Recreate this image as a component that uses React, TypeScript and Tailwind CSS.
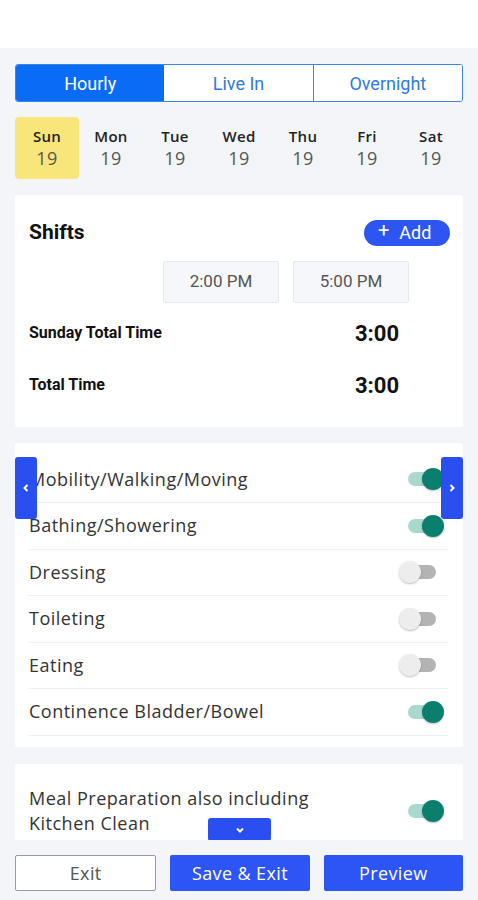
import React from "react";

const muli = { fontFamily: "'Open Sans', Lato, sans-serif" };

function Toggle({ on }: { on: boolean }) {
  return (
    <div className="relative w-[46px] h-[24px] shrink-0">
      <div
        className={`absolute left-[9px] top-[5px] w-[28px] h-[14px] rounded-full ${
          on ? "bg-[#a9d9cd]" : "bg-[#b3b3b3]"
        }`}
      />
      <div
        className={`absolute top-[1px] w-[22px] h-[22px] rounded-full shadow-[0_1px_2px_rgba(0,0,0,0.25)] ${
          on ? "left-[23px] bg-[#0b7f6e]" : "left-0 bg-[#ededed]"
        }`}
      />
    </div>
  );
}

const activities: [string, boolean][] = [
  ["Mobility/Walking/Moving", true],
  ["Bathing/Showering", true],
  ["Dressing", false],
  ["Toileting", false],
  ["Eating", false],
  ["Continence Bladder/Bowel", true],
];

const days = ["Sun", "Mon", "Tue", "Wed", "Thu", "Fri", "Sat"];

export default function App() {
  return (
    <div
      className="w-[478px] h-[900px] flex flex-col bg-[#f3f5f9] overflow-hidden"
      style={{ fontFamily: "Roboto, sans-serif" }}
    >
      <div className="h-[48px] bg-white shrink-0" />
      <div className="relative flex-1 overflow-hidden px-[15px] pt-[16px]">
        {/* Tabs */}
        <div className="flex h-[38px] rounded-[3px] border border-[#3a86e6] overflow-hidden text-[18px]">
          <div className="flex-1 flex items-center justify-center bg-[#0a6cf5] text-white">Hourly</div>
          <div className="flex-1 flex items-center justify-center bg-white text-[#2f7be0] border-r border-[#3a86e6]">
            Live In
          </div>
          <div className="flex-1 flex items-center justify-center bg-white text-[#2f7be0]">Overnight</div>
        </div>

        {/* Days */}
        <div className="grid grid-cols-7 mt-[15px] h-[62px]" style={muli}>
          {days.map((d, i) => (
            <div
              key={d}
              className={`flex flex-col items-center justify-center rounded-[4px] ${
                i === 0 ? "bg-[#f8e67a]" : ""
              }`}
            >
              <span className="text-[15px] font-semibold text-[#222] leading-[20px] tracking-[0.3px]">{d}</span>
              <span className="text-[18px] text-[#555] leading-[24px] tracking-[0.5px]">19</span>
            </div>
          ))}
        </div>

        {/* Shifts card */}
        <div className="mt-[16px] bg-white rounded-[3px] px-[14px] pt-[22px] pb-[28px]">
          <div className="flex items-center justify-between">
            <span className="text-[21px] font-bold text-[#111]">Shifts</span>
            <div className="flex items-center gap-[10px] bg-[#2d55f2] text-white rounded-full h-[26px] w-[86px] pl-[14px] mr-[-1px] text-[18px]">
              <span className="text-[20px] leading-none -mt-[6px]">+</span>
              <span>Add</span>
            </div>
          </div>
          <div className="flex gap-[14px] mt-[12px] ml-[134px]">
            {["2:00 PM", "5:00 PM"].map((t) => (
              <div
                key={t}
                className="w-[116px] h-[42px] flex items-center justify-center bg-[#f6f7fa] border border-[#e6e9ee] rounded-[2px] text-[17px] text-[#555]"
              >
                {t}
              </div>
            ))}
          </div>
          <div className="flex items-start mt-[18px]">
            <span className="text-[16px] font-bold text-[#111] w-[326px]">Sunday Total Time</span>
            <span className="text-[22px] font-bold text-[#111] leading-[26px]">3:00</span>
          </div>
          <div className="flex items-start mt-[26px]">
            <span className="text-[16px] font-bold text-[#111] w-[326px]">Total Time</span>
            <span className="text-[22px] font-bold text-[#111] leading-[26px]">3:00</span>
          </div>
        </div>

        {/* Activities card */}
        <div className="relative mt-[16px] bg-white rounded-[3px] px-[14px] pt-[14px] pb-[11px]" style={muli}>
          {activities.map(([label, on]) => (
            <div
              key={label}
              className="flex items-center justify-between h-[46.5px] border-b border-[#eef0f3] pr-[4px]"
            >
              <span className="text-[18px] text-[#333] tracking-[0.5px]">{label}</span>
              <Toggle on={on} />
            </div>
          ))}
          <div className="absolute left-0 top-[14px] w-[22px] h-[62px] bg-[#2a4ff0] rounded-[3px] flex items-center justify-center">
            <svg width="8" height="10" viewBox="0 0 8 10">
              <path d="M5.5 2 L2.5 5 L5.5 8" stroke="white" strokeWidth="2" fill="none" />
            </svg>
          </div>
          <div className="absolute right-0 top-[14px] w-[22px] h-[62px] bg-[#2a4ff0] rounded-[3px] flex items-center justify-center">
            <svg width="8" height="10" viewBox="0 0 8 10">
              <path d="M2.5 2 L5.5 5 L2.5 8" stroke="white" strokeWidth="2" fill="none" />
            </svg>
          </div>
        </div>

        {/* Meal card */}
        <div className="mt-[17px] bg-white rounded-[3px] px-[14px] pt-[22px] pb-[20px]" style={muli}>
          <div className="flex items-center justify-between pr-[4px]">
            <span className="text-[18px] text-[#333] leading-[25px] tracking-[0.5px]">
              Meal Preparation also including
              <br />
              Kitchen Clean
            </span>
            <Toggle on={true} />
          </div>
        </div>

        <div className="absolute bottom-[-1px] left-[208px] w-[63px] h-[23px] bg-[#2a4ff0] rounded-[3px] flex items-center justify-center">
          <svg width="10" height="8" viewBox="0 0 10 8">
            <path d="M2 2.5 L5 5.5 L8 2.5" stroke="white" strokeWidth="2" fill="none" />
          </svg>
        </div>
      </div>

      {/* Bottom bar */}
      <div className="h-[60px] shrink-0 flex gap-[14px] px-[15px] pt-[15px] pb-[9px] tracking-[0.4px]" style={muli}>
        <div className="flex-1 flex items-center justify-center bg-white border border-[#9a9a9a] rounded-[2px] text-[18px] text-[#555]">
          Exit
        </div>
        <div className="flex-1 flex items-center justify-center bg-[#2d55f5] rounded-[2px] text-[18px] text-white">
          Save &amp; Exit
        </div>
        <div className="flex-1 flex items-center justify-center bg-[#2d55f5] rounded-[2px] text-[18px] text-white">
          Preview
        </div>
      </div>
    </div>
  );
}
